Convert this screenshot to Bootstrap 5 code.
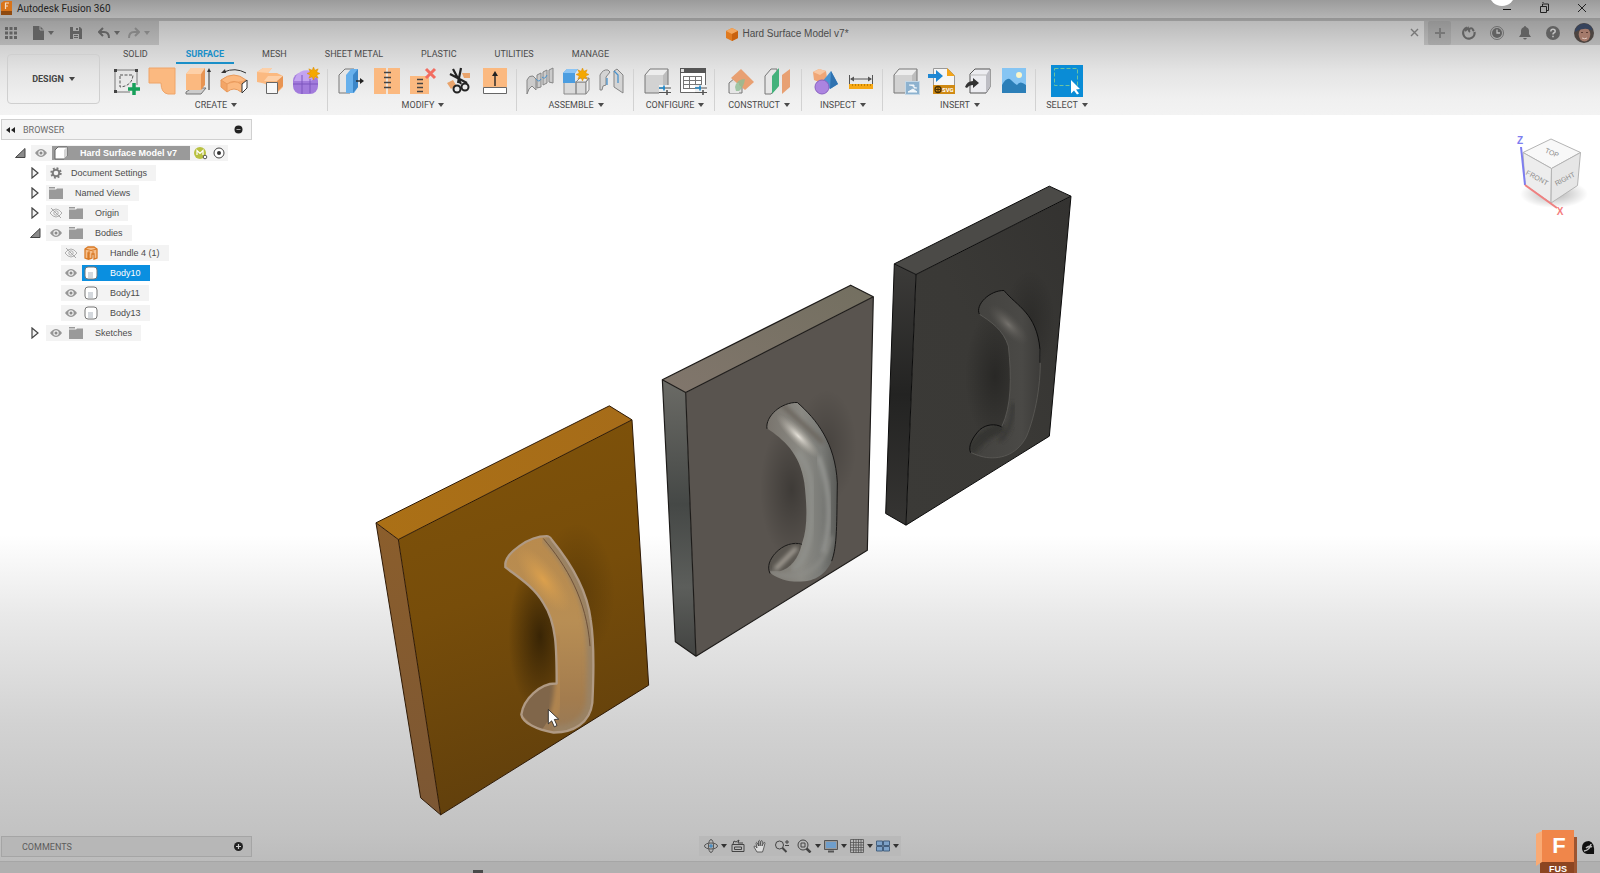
<!DOCTYPE html>
<html lang="en">
<head>
<meta charset="utf-8">
<meta name="viewport" content="width=device-width, initial-scale=1">
<title>Autodesk Fusion 360</title>
<link href="https://cdn.jsdelivr.net/npm/bootstrap@5.3.0/dist/css/bootstrap.min.css" rel="stylesheet">
<style>
:root{--ui:"Liberation Sans",Arial,sans-serif;--label:Roboto,"Liberation Sans",sans-serif;--ink:#4b4b4b}
body{font-family:var(--ui);font-size:10px;line-height:14px;color:var(--ink);overflow:hidden}
button{border:0;background:none;padding:0;color:inherit;font:inherit;display:inline-flex;align-items:center;justify-content:center}
svg{display:block;flex:none}
.title-strip{height:21px;background:linear-gradient(#9b9b9b,#b5b5b5 18px,#939393 18px,#999);color:#222;position:relative;overflow:hidden}
.app-name{font-family:Roboto,sans-serif;line-height:18px}
.win-btn{width:37px;height:16px;color:#222}
.bubble{position:absolute;right:85px;top:-20px;width:26px;height:26px;border-radius:50%;background:#fff}
.app-head{background:linear-gradient(#bababa,#cfcfcf 23px,#e4e4e4 50px,#f0f0f0 78px,#f3f3f3)}
.tab-strip{height:24px}
.dark-bar{background:linear-gradient(#9d9d9d,#b3b3b3);color:#616161}
.quick{width:159px;padding-left:5px}
.doc-name{padding:2px 0 0 6px}
.plus-btn{width:23px;height:24px;background:#00000012;color:#777;border-radius:2px}
.round-btn{width:28px;height:22px}
.avatar{width:33px}
.design-btn{width:93px;height:50px;margin:9px 3px 0 7px;border:1px solid #cfcfcf;border-radius:4px;font:bold 9px/14px var(--label);gap:5px;color:#444}
.rib-tabs{height:19px;padding-left:10px;gap:18px;font-family:var(--label);font-size:9px}
.rib-tabs button{padding:0 10px;height:19px;border-bottom:2px solid transparent}
.rib-tabs .on{color:#1a8fc8;font-weight:bold;border-color:#1a8fc8}
.tools{padding-top:1px}
.tool-group{padding:0 4px 0 5px;position:relative;height:50px}
.tool-group:not(:last-child)::after{content:"";position:absolute;right:0;top:4px;height:42px;border-right:1px solid #d2d2d2}
.tool-group.wide{padding:0 7px 0 8px}
.tool{width:36px;height:32px}
.tool.picked{width:32px;background:#0a8cd6;margin:0 2px}
.group-label{font-family:var(--label);font-size:9px;gap:4px;height:14px;margin-top:1px}
.caret{width:0;height:0;border:3px solid transparent;border-top:4px solid currentColor;border-bottom:0}
.view{background:linear-gradient(#fff 0,#fff 420px,#e9e9e9 500px,#d2d2d2 610px,#c2c2c2 720px,#bcbcbc)}
.scene{position:absolute;inset:0;width:100%;height:100%}
.side{width:252px;padding-left:1px}
.side-bar{height:21px;font-family:var(--label);font-size:9px;color:#6b6b6b;background:#f3f3f3;border:1px solid #d0d0d0;padding:0 8px 0 4px}
.browser-bar{margin-top:4px}
.comments{background:#b7b7b7;border-color:#a5a5a5;color:#5c5c5c;padding-left:20px}
.tree{font-size:9px;line-height:16px;padding-top:3px}
.tree li{display:flex;align-items:center;height:20px;gap:3px}
.tree button{width:16px;height:16px}
.l0{padding-left:11px}.l1{padding-left:26px}.l2{padding-left:60px}
.item{display:inline-flex;align-items:center;height:16px;background:#f3f3f3;padding:0 0 0 3px;gap:4px}
.pick{display:inline-flex;align-items:center;height:16px;gap:12px;padding:0 9px 0 2px}
.pick.near{gap:8px;padding-left:0}.pick.first{padding-left:0}
.pick.root{background:#9a9a9a;color:#fff;font-weight:bold;height:14px;padding-right:13px}
.pick.sel{background:#0a8fe0;color:#fff}
.cube{position:absolute;right:8px;top:12px}
.nav-wrap{padding-right:252px}
.nav-tools{background:#b9b9b9;height:20px;color:#333;padding:0 2px}
.nav-tools button{width:22px;height:20px}
.nav-tools .slim{width:20px}
.nav-tools .drop{width:6px}
.timeline{height:12px;background:#b0b0b0;border-top:1px solid #a6a6a6}
.marker{width:10px;height:4px;background:#4a4a4a;margin-left:473px;margin-top:8px}
.brand-badge{position:absolute;right:0;bottom:0}
</style>
</head>
<body class="d-flex flex-column vh-100">

<svg width="0" height="0" class="position-absolute" aria-hidden="true">
<defs>
<symbol id="eye" viewBox="0 0 14 12"><path d="M1 6q6-8 12 0q-6 8-12 0z" fill="#969696"/><circle cx="7" cy="6" r="2.700" fill="#efefef"/><circle cx="7" cy="6" r="1.500" fill="#8a8a8a"/></symbol>
<symbol id="eyeoff" viewBox="0 0 14 12"><path d="M1 6q6-8 12 0q-6 8-12 0z" fill="none" stroke="#b0b0b0"/><circle cx="7" cy="6" r="2.200" fill="none" stroke="#b0b0b0"/><path d="M2 1l10 10" stroke="#a8a8a8"/></symbol>
<symbol id="folder" viewBox="0 0 14 12"><path d="M0 0h6v1.500H0zM0 2.500h7l1-1h6V12H0z" fill="#9a9a9a"/></symbol>
<symbol id="shut" viewBox="0 0 10 12"><path d="M2 1l6 5-6 5z" fill="#f2f2f2" stroke="#444" stroke-width="1.200"/></symbol>
<symbol id="open" viewBox="0 0 12 12"><path d="M11 1.500v9H1.500z" fill="#8b8b8b" stroke="#444"/></symbol>
<symbol id="body" viewBox="0 0 14 14"><rect x="1" y="1" width="12" height="12" rx="3" fill="#fff" stroke="#777"/><path d="M4 6h5v6H4z" fill="#d4d8dd"/></symbol>
<symbol id="box" viewBox="0 0 28 28"><path d="M2 8h18v18H2z" fill="#d2d2d2"/><path d="M20 8l5-6v18l-5 6z" fill="#bdbdbd"/><path d="M2 8l5-6h18l-5 6z" fill="#ededed"/><path d="M2 8l5-6h18v18l-5 6H2z" fill="none" stroke="#777"/></symbol>
<symbol id="star" viewBox="-7 -7 14 14"><path d="M0-7l1.500 3.500L5-5 3.500-1.500 7 0 3.500 1.500 5 5 1.500 3.500 0 7-1.500 3.500-5 5-3.500 1.500-7 0-3.500-1.500-5-5-1.500-3.500z" fill="#f5a800" stroke="#d98a00" stroke-width=".5"/></symbol>
<symbol id="sliders" viewBox="0 0 12 10"><path d="M0 3h12M0 7.500h12" stroke="#555" stroke-width="1.200"/><path d="M0 3h6" stroke="#1f88c9" stroke-width="1.400"/><path d="M5 .5v5" stroke="#1f88c9" stroke-width="1.600"/><path d="M8 5v5" stroke="#555" stroke-width="1.600"/></symbol>
<linearGradient id="gTop" x2="1" y2="0"><stop stop-color="#ab7016"/><stop offset="1" stop-color="#a66c19"/></linearGradient>
<linearGradient id="gFront" x2=".2" y2="1"><stop stop-color="#80530a"/><stop offset=".5" stop-color="#774d0a"/><stop offset="1" stop-color="#62400c"/></linearGradient>
<linearGradient id="gSide" x2="0" y2="1"><stop stop-color="#8b5e2c"/><stop offset="1" stop-color="#7c5734"/></linearGradient>
<radialGradient id="shade"><stop stop-color="#000" stop-opacity=".5"/><stop offset="1" stop-color="#000" stop-opacity="0"/></radialGradient>
<radialGradient id="glow"><stop stop-color="#dca04c"/><stop offset="1" stop-color="#cf9a50" stop-opacity="0"/></radialGradient>
<linearGradient id="gHandle" x2="0" y2="1"><stop stop-color="#b98a4c"/><stop offset=".45" stop-color="#b88e54"/><stop offset=".8" stop-color="#a37c4e"/><stop offset="1" stop-color="#94795a"/></linearGradient>
<linearGradient id="mTop" x1="0" y1="1" x2="1" y2="0"><stop stop-color="#81766c"/><stop offset="1" stop-color="#736f60"/></linearGradient>
<linearGradient id="mSide" x2="0" y2="1"><stop stop-color="#6b6b66"/><stop offset=".45" stop-color="#454846"/><stop offset=".75" stop-color="#5c5e5b"/><stop offset="1" stop-color="#424341"/></linearGradient>
<linearGradient id="mHandle" x2="1" y2="0"><stop stop-color="#77726b"/><stop offset=".5" stop-color="#8b8a84"/><stop offset=".75" stop-color="#7b7c78"/><stop offset="1" stop-color="#555653"/></linearGradient>
<radialGradient id="mGlow"><stop stop-color="#e6e2da"/><stop offset="1" stop-color="#a9a49a" stop-opacity="0"/></radialGradient>
<linearGradient id="dFront" x1="1" y1="0" x2="0" y2="1"><stop stop-color="#333230"/><stop offset=".5" stop-color="#3a3936"/><stop offset="1" stop-color="#3b3a37"/></linearGradient>
<linearGradient id="dSide" x2="0" y2="1"><stop stop-color="#3c3b39"/><stop offset=".5" stop-color="#232322"/><stop offset="1" stop-color="#363533"/></linearGradient>
<linearGradient id="dHandle" x2="1" y2="0"><stop stop-color="#42413e"/><stop offset=".7" stop-color="#4a4946"/><stop offset="1" stop-color="#383735"/></linearGradient>
<radialGradient id="dGlow"><stop stop-color="#74716c"/><stop offset="1" stop-color="#55534f" stop-opacity="0"/></radialGradient>
<filter id="soft"><feGaussianBlur stdDeviation="7"/></filter>
<clipPath id="hc1"><path d="M436 522C440 490 505 440 560 440C600 475 680 590 692 690C703 760 700 880 697 940C690 1000 640 1030 580 1029C530 1020 488 1000 484 975C490 930 540 880 590 882C590 780 590 700 550 640C520 590 470 560 436 533z"/></clipPath>
<clipPath id="hc2"><path d="M351 476C345 440 395 397 442 399C500 450 556 520 562 640C560 760 562 830 545 875C520 930 470 942 420 935C390 930 365 915 360 908C350 890 360 870 375 852C400 825 430 817 456 822C475 770 470 700 463 640C450 550 400 510 351 476z"/></clipPath>
<clipPath id="hc3"><path d="M328 434C315 405 360 362 402 363C440 410 500 430 510 540C516 640 495 740 470 800C445 850 400 870 350 864C325 860 310 852 300 848C292 830 310 800 330 780C350 764 375 762 395 772C425 710 425 620 415 530C400 480 360 455 328 434z"/></clipPath>
</defs>
</svg>

<header>
<div class="title-strip d-flex align-items-start">
  <svg width="13" height="16" viewBox="0 0 13 16"><path d="M1 3l3-2h8v10H1z" fill="#d9741a"/><path d="M1 11h11v4H1z" fill="#8f4a10"/><path d="M5 3h4M5 6h3M5.500 3v6" stroke="#f5dcc5" stroke-width="1.200"/></svg>
  <span class="app-name ms-1">Autodesk Fusion 360</span>
  <div class="ms-auto d-flex">
    <span class="bubble"></span>
    <button class="win-btn" aria-label="Minimize"><svg width="10" height="10"><path d="M0 6.500h8" stroke="#111"/></svg></button>
    <button class="win-btn" aria-label="Restore"><svg width="10" height="12" fill="none" stroke="#222"><path d="M.5 4.500h6v6h-6zM2.500 4V2h6v6.500H7M2 0h2"/></svg></button>
    <button class="win-btn" aria-label="Close"><svg width="10" height="10"><path d="M1 1l8 8M9 1l-8 8" stroke="#222"/></svg></button>
  </div>
</div>

<div class="app-head">
<div class="tab-strip d-flex">
  <div class="quick dark-bar d-flex align-items-center">
    <button aria-label="Data panel" class="me-3"><svg width="12" height="12" fill="currentColor"><path d="M0 0h3v3H0zM4.500 0h3v3h-3zM9 0h3v3H9zM0 4.500h3v3H0zM4.500 4.500h3v3h-3zM9 4.500h3v3H9zM0 9h3v3H0zM4.500 9h3v3h-3zM9 9h3v3H9z"/></svg></button>
    <button aria-label="File" class="gap-1 me-3"><svg width="11" height="14" fill="currentColor"><path d="M0 0h7l4 4v10H0z"/><path d="M7 0v4h4" fill="none" stroke="#aaa"/></svg><span class="caret"></span></button>
    <button aria-label="Save" class="me-3"><svg width="12" height="12"><path d="M0 0h10l2 2v10H0z" fill="currentColor"/><path d="M3 0h6v4H3zM3 7h6v5H3z" fill="#a9a9a9"/><path d="M6 1h2v2H6zM4 8h4v1H4zM4 10h4v1H4z" fill="currentColor"/></svg></button>
    <button aria-label="Undo" class="gap-1 me-2"><svg width="12" height="12" fill="none" stroke="currentColor" stroke-width="2"><path d="M5 1L1 5l4 4M1 5h5q5 0 5 6"/></svg><span class="caret"></span></button>
    <button aria-label="Redo" class="gap-1 opacity-50"><svg width="12" height="12" fill="none" stroke="currentColor" stroke-width="2"><path d="M7 1l4 4-4 4M11 5H6q-5 0-5 6"/></svg><span class="caret"></span></button>
  </div>
  <div class="flex-grow-1 d-flex align-items-center">
    <div class="doc-name flex-grow-1 d-flex justify-content-center align-items-center gap-1">
      <svg width="12" height="13"><path d="M6 0l6 3v7l-6 3-6-3V3z" fill="#e07a1f"/><path d="M6 0l6 3-6 3-6-3z" fill="#f2a65e"/><path d="M6 6l6-3v7l-6 3z" fill="#c9620f"/></svg>
      <span>Hard Surface Model v7*</span>
    </div>
    <button class="me-1" aria-label="Close document"><svg width="10" height="10"><path d="M1 1l7 7M8 1l-7 7" stroke="#777" stroke-width="1.400"/></svg></button>
  </div>
  <div class="dark-bar d-flex align-items-center ps-1">
    <button class="plus-btn" aria-label="New design"><svg width="12" height="12"><path d="M6 1v10M1 6h10" stroke="currentColor" stroke-width="2"/></svg></button>
    <button class="round-btn ms-1" aria-label="Extensions"><svg width="14" height="14" fill="none" stroke="currentColor"><path d="M5 1.500A5.700 5.700 0 1 0 12.500 6" stroke-width="2.200"/><path d="M3 5l3-3 1 3M8 6a2 2 0 1 1 3-2l1 1" stroke-width="2"/></svg></button>
    <button class="round-btn" aria-label="Job status"><svg width="14" height="14"><circle cx="7" cy="7" r="6.500" fill="none" stroke="currentColor" stroke-width=".8"/><circle cx="7" cy="7" r="5" fill="currentColor"/><path d="M7 3.500V7h3" fill="none" stroke="#bbb" stroke-width="1.300"/></svg></button>
    <button class="round-btn" aria-label="Notifications"><svg width="12" height="14" fill="currentColor"><path d="M6 0q1 0 1 1 3 1 3 4v3l2 3H0l2-3V5q0-3 3-4 0-1 1-1zM4 12h4q-2 3-4 0z"/></svg></button>
    <button class="round-btn" aria-label="Help"><svg width="14" height="14"><circle cx="7" cy="7" r="7" fill="currentColor"/><path d="M4.800 5.500q0-2.200 2.200-2.200t2.200 2q0 1.200-1.400 1.700-.8.400-.8 1.400M7 9.800v1.500" fill="none" stroke="#c4c4c4" stroke-width="1.500"/></svg></button>
    <button class="avatar" aria-label="Account"><svg width="20" height="20"><circle cx="10" cy="10" r="10" fill="#4c4440"/><ellipse cx="10.500" cy="11.500" rx="5.800" ry="7" fill="#a47a6b"/><path d="M1 7Q4 0 11 .5q7 1 7.500 7Q10 3.500 1 9z" fill="#36435c"/><path d="M7 9.500h2M12 9.500h2" stroke="#5a3c33"/><path d="M8 15q3 1.500 5 0" stroke="#e0c8bf" fill="none"/></svg></button>
  </div>
</div>

<div class="d-flex">
  <button class="design-btn">DESIGN <span class="caret"></span></button>
  <div>
    <nav class="rib-tabs d-flex" aria-label="Workspace tabs">
      <button>SOLID</button><button class="on">SURFACE</button><button>MESH</button><button>SHEET METAL</button><button>PLASTIC</button><button>UTILITIES</button><button>MANAGE</button>
    </nav>
    <div class="tools d-flex">
      <div class="tool-group">
        <div class="d-flex">
          <button class="tool" aria-label="Create sketch"><svg width="28" height="28"><path d="M3 3h22v15M3 3v22h15" fill="none" stroke="#777"/><path d="M8 8h13q-1 11-13 12z" fill="none" stroke="#555" stroke-dasharray="3 1.500"/><path d="M2 2h3v3H2zM23 2h3v3h-3zM2 23h3v3H2z" fill="#444"/><path d="M22 16v12M16 22h12" stroke="#17a05a" stroke-width="3.500"/></svg></button>
          <button class="tool" aria-label="Patch"><svg width="28" height="28"><path d="M1 1h26v26h-7q-7-1-7-11H1z" fill="#fbb980" stroke="#efa468"/></svg></button>
          <button class="tool" aria-label="Extrude"><svg width="28" height="28"><path d="M2 25l6-4h14l-5 6H2z" fill="#ccc" stroke="#777"/><path d="M2 7l5-6h14l-4 6v16H2z" fill="#fbb980"/><path d="M2 7l5-6h14l-4 6z" fill="#fdd0a8"/><path d="M17 7l4-6v17l-4 5z" fill="#e89452"/><path d="M25 23V4" stroke="#333"/><path d="M23 5l2-4 2 4z" fill="#333"/></svg></button>
          <button class="tool" aria-label="Revolve"><svg width="28" height="28"><path d="M1 13q13-10 25 0l-5 12q-7-6-14 0z" fill="#fbb980" stroke="#e89a5c"/><path d="M1 13l6 4v8l-6-5zM7 17q7-5 14 0l5-4" fill="#f3a566" stroke="#e89a5c"/><path d="M22 17l5-4v8l-5 5z" fill="#fff" stroke="#333"/><path d="M4 5q11-5 22 1" fill="none" stroke="#333"/><path d="M1 6l4-4 1 4z" fill="#333"/></svg></button>
          <button class="tool" aria-label="Loft"><svg width="28" height="28"><path d="M1 5l6-4h9l-4 5h9l6 3v11l-5 5-9-6q-4-3-12-4z" fill="#fbb980"/><path d="M1 5l6-4h9l-4 5zM12 9h15l-5 5H8z" fill="#fdd0a8"/><path d="M21 14l6-5v10l-5 5z" fill="#e89452"/><path d="M10.500 15.500h11v11h-11z" fill="#f7f7f7" stroke="#666"/></svg></button>
          <button class="tool" aria-label="Create form"><svg width="28" height="28"><rect x="1" y="6" width="25" height="21" rx="8" fill="#a27bdc"/><path d="M4 9q5-8 17-5l4 6-6 4H2z" fill="#c3a3f0"/><path d="M1 17h25M10 8v19M18 12v14" stroke="#7c57be" fill="none"/><use href="#star" x="15" y="0" width="13" height="13"/></svg></button>
        </div>
        <button class="group-label w-100">CREATE <span class="caret"></span></button>
      </div>
      <div class="tool-group">
        <div class="d-flex">
          <button class="tool" aria-label="Press pull"><svg width="28" height="28"><path d="M2 8l6-6h9l-4 6v18H2z" fill="#e6e6e6" stroke="#777"/><path d="M9 8l5-6h7v18l-4 6H9z" fill="#67b0ec"/><path d="M16 8l5-6v18l-5 6z" fill="#3b86c8"/><path d="M19 14h5" stroke="#222" stroke-width="1.400"/><path d="M23 11l4 3-4 3z" fill="#222"/></svg></button>
          <button class="tool" aria-label="Stitch"><svg width="28" height="28"><path d="M1 1h12v26H1zM15 1h12v26H15z" fill="#fbb980"/><path d="M14 1v26" stroke="#f5e0cd"/><path d="M11 5.500h7M11 10.500h7M11 15.500h7M11 20.500h7" stroke="#444" stroke-width="1.300"/></svg></button>
          <button class="tool" aria-label="Unstitch"><svg width="28" height="28"><path d="M1 9h19v18H1z" fill="#fbb980"/><path d="M8 12.500h6M8 16.500h6M8 20.500h6M8 24.500h6" stroke="#444" stroke-width="1.300"/><path d="M17 2l9 9M26 2l-9 9" stroke="#f26d61" stroke-width="3"/></svg></button>
          <button class="tool" aria-label="Trim"><svg width="28" height="28"><path d="M2 16l6-3 3 5-5 4zM17 6h8v5h-6z" fill="#e9a46c"/><path d="M8 2l8 15M16 1l-3 15M5 7l17 9" stroke="#222" stroke-width="2.200"/><circle cx="12" cy="22" r="3.500" fill="none" stroke="#222" stroke-width="2"/><circle cx="20" cy="20" r="3.500" fill="none" stroke="#222" stroke-width="2"/></svg></button>
          <button class="tool" aria-label="Extend"><svg width="28" height="28"><path d="M2 1h24v19H2z" fill="#fbb980"/><path d="M2.500 20.500h23v6h-23z" fill="#fff" stroke="#666"/><path d="M14 19V8" stroke="#222" stroke-width="1.400"/><path d="M11 9l3-5 3 5z" fill="#222"/></svg></button>
        </div>
        <button class="group-label w-100">MODIFY <span class="caret"></span></button>
      </div>
      <div class="tool-group">
        <div class="d-flex">
          <button class="tool" aria-label="New component"><svg width="28" height="28"><g fill="#cbcbcb" stroke="#858585"><path d="M1 27V13q2-5 6-4l3 3v11l-4-4-3 3zM11 21V8l4-2v14zM17 18V5l4-2v13zM23 15V3l4-2v15z"/></g><path d="M10 12q3 4 5 0M16 10q3 3 5-2" fill="none" stroke="#4a93cc"/></svg></button>
          <button class="tool" aria-label="Joint"><svg width="28" height="28"><path d="M2 15h12v12H2zM14 15h10v12H14z" fill="#dadada" stroke="#8a8a8a"/><path d="M14 15l4-4h9l-3 4zM24 15l3-4v12l-3 4z" fill="#efefef" stroke="#8a8a8a"/><path d="M1 6l4-4h11l-3 4v10H1z" fill="#4b9de0"/><path d="M1 6l4-4h11l-3 4z" fill="#8cc5f5"/><use href="#star" x="14" y="1" width="13" height="13"/></svg></button>
          <button class="tool" aria-label="Rigid group"><svg width="28" height="28"><path d="M2 23V8q3-6 8-5l2 2-4 5v8l-3 1-1 4zM16 20V4l3-2 6 6v18z" fill="#d4d4d4" stroke="#858585"/><path d="M9 11v7M16 4l4 4v8" fill="none" stroke="#4a93cc" stroke-width="1.300"/></svg></button>
        </div>
        <button class="group-label w-100">ASSEMBLE <span class="caret"></span></button>
      </div>
      <div class="tool-group">
        <div class="d-flex">
          <button class="tool" aria-label="Configure design"><svg width="28" height="28"><use href="#box" width="28" height="28"/><path d="M16 18h12v10H16z" fill="#f0f0f0"/><use href="#sliders" x="16" y="18" width="12" height="10"/></svg></button>
          <button class="tool" aria-label="Configuration table"><svg width="28" height="28"><path d="M1.500 1.500h25v24h-25z" fill="#fff" stroke="#666"/><path d="M1 1h26v5H1z" fill="#555"/><path d="M2 2h3v3H2z" fill="#ddd"/><path d="M4 9.500h19M4 13.500h19M4 17.500h19M4 21.500h12M4.500 9v13M10.500 9v13M16.500 9v13M22.500 9v8" stroke="#777"/><path d="M16 18h12v10H16z" fill="#f0f0f0"/><use href="#sliders" x="16" y="18" width="12" height="10"/></svg></button>
        </div>
        <button class="group-label w-100">CONFIGURE <span class="caret"></span></button>
      </div>
      <div class="tool-group wide">
        <div class="d-flex">
          <button class="tool" aria-label="Offset plane"><svg width="28" height="28"><path d="M2 16l6-5h12l-5 5v10H2z" fill="#e0e0e0" stroke="#777"/><path d="M14 2L27 15 18 23 4 11z" fill="#e8a072"/><path d="M3 16h9v10H3z" fill="#e6e6e6"/><path d="M8 20q2-8 10-8-1 8-6 12H9z" fill="#8fbd93" opacity=".8"/></svg></button>
          <button class="tool" aria-label="Midplane"><svg width="28" height="28"><path d="M2 9l6-7h6v18l-6 7H2z" fill="#e6e6e6" stroke="#777"/><path d="M9 9l7-8v18l-7 8z" fill="#44b27c"/><path d="M19 8l8-6v18l-8 7z" fill="#e8a072"/></svg></button>
        </div>
        <button class="group-label w-100">CONSTRUCT <span class="caret"></span></button>
      </div>
      <div class="tool-group">
        <div class="d-flex">
          <button class="tool" aria-label="Interference"><svg width="28" height="28"><path d="M2 5l6-3 7 2 1 7-6 5-7-3z" fill="#f0a676"/><path d="M2 5l6-3 7 2-6 4z" fill="#f8c7a2"/><path d="M20 4l7 13-8 5-8-7z" fill="#4a93d0"/><path d="M20 4l7 13-8 5z" fill="#2f72b0"/><circle cx="11" cy="20" r="7" fill="#ac84e0" stroke="#8a62c2"/></svg></button>
          <button class="tool" aria-label="Measure"><svg width="28" height="28"><path d="M2.500 8v9M25.500 8v9M4 12h20" stroke="#555"/><path d="M3 12l4-2.500v5zM25 12l-4-2.500v5z" fill="#555"/><path d="M2 17h24v5H2z" fill="#f7a814"/><path d="M5.500 17v2M8.500 17v2M11.500 17v2M14.500 17v2M17.500 17v2M20.500 17v2M23.500 17v2" stroke="#c07f00"/></svg></button>
        </div>
        <button class="group-label w-100">INSPECT <span class="caret"></span></button>
      </div>
      <div class="tool-group">
        <div class="d-flex">
          <button class="tool" aria-label="Insert derive"><svg width="28" height="28"><use href="#box" width="28" height="28"/><rect x="13.500" y="14.500" width="14" height="13" fill="#8db2cf" stroke="#c5d8e6"/><path d="M17 18h5v3h3M16 25h9l-4-3z" fill="#f3f8fb" stroke="#f3f8fb"/></svg></button>
          <button class="tool" aria-label="Insert SVG"><svg width="28" height="28"><path d="M5.500 1.500h14l7 7v18h-21z" fill="#f6f6f6" stroke="#999"/><path d="M19 1l8 8h-8z" fill="#f3a51a"/><path d="M5 18h22v9H5z" fill="#d08a14"/><circle cx="10" cy="22.500" r="3" fill="none" stroke="#4a3000" stroke-width="1.300"/><path d="M10 20v5M7.500 22.500h5" stroke="#4a3000"/><text x="14" y="25" font-size="6" font-weight="bold" fill="#fff" font-family="Roboto,sans-serif">SVG</text><path d="M0 7h8V3l7 6-7 6v-4H0z" fill="#1e87d3"/></svg></button>
          <button class="tool" aria-label="Insert CAD"><svg width="28" height="28"><path d="M6 7l5-5h15v18l-4 6H6z" fill="#ececf0" stroke="#555"/><path d="M22 8l4-6v18l-4 6z" fill="#bdbdc4"/><path d="M6 8h16" stroke="#bbb"/><path d="M1 20q2-6 8-6v-3l6 5-6 5v-3q-4 0-6 3z" fill="#333"/></svg></button>
          <button class="tool" aria-label="Canvas image"><svg width="28" height="28"><path d="M2 1h24v25H2z" fill="#86c5f3"/><path d="M2 18q5-9 9-5t6 5q3-5 9 0v8H2z" fill="#2c7fb8"/><circle cx="19" cy="8" r="3" fill="#fcf6c9"/></svg></button>
        </div>
        <button class="group-label w-100">INSERT <span class="caret"></span></button>
      </div>
      <div class="tool-group">
        <div class="d-flex justify-content-center px-2">
          <button class="tool picked" aria-label="Select"><svg width="32" height="32"><path d="M3.500 3.500h23v17h-23z" fill="none" stroke="#6dc3a0" stroke-dasharray="4 2"/><path d="M20 15l9 9-4 .5 3 4-2 1-3-4-3 3z" fill="#fff"/></svg></button>
        </div>
        <button class="group-label w-100">SELECT <span class="caret"></span></button>
      </div>
    </div>
  </div>
</div>
</div>
</header>

<main class="view flex-grow-1 position-relative d-flex flex-column justify-content-between">
<svg class="scene" viewBox="0 116 1600 745" role="img" aria-label="Three door pull models">
  <g transform="translate(360 390) scale(.33333)" stroke-linejoin="round">
    <path d="M48 400L748 49 816 91 115 450z" fill="url(#gTop)"/>
    <path d="M115 450L816 91 866 887 242 1276z" fill="url(#gFront)"/>
    <path d="M48 400L115 450 242 1276 182 1225z" fill="url(#gSide)"/>
    <ellipse cx="540" cy="740" rx="95" ry="230" fill="url(#shade)"/>
    <ellipse cx="650" cy="610" rx="115" ry="210" fill="url(#shade)" opacity=".4"/>
    <path d="M48 400L748 49 816 91 866 887 242 1276 182 1225zL115 450 816 91M115 450L242 1276" fill="none" stroke="#2e1905" stroke-width="3"/>
    <g clip-path="url(#hc1)">
      <path d="M400 400h330v660H400z" fill="url(#gHandle)"/>
      <path d="M484 975C490 930 540 880 590 882Q610 960 560 1000L540 1030z" fill="#80664a"/>
      <ellipse cx="550" cy="570" rx="45" ry="120" fill="url(#glow)" transform="rotate(-38 550 570)"/>
      <path d="M590 740Q610 930 570 1000" fill="none" stroke="#b1854f" stroke-width="26" filter="url(#soft)"/>
      <path d="M560 440C600 475 680 590 692 690C703 760 700 880 697 940C690 1000 640 1030 580 1029" fill="none" stroke="#9a8263" stroke-width="40" filter="url(#soft)"/>
    </g>
    <path d="M550 447C620 530 680 630 690 770" fill="none" stroke="#6e5138" stroke-width="3"/>
    <path d="M436 522C440 490 505 440 560 440Q568 440 574 449C620 505 680 590 692 690C703 760 700 880 697 940C690 1000 640 1030 580 1029C530 1020 488 1000 484 975C490 930 540 880 590 882C590 780 590 700 550 640C520 590 470 560 436 533z" fill="none" stroke="#b09a84" stroke-width="7"/>
    <path d="M565 960v43l10-9 8 18 8-4-8-18 13-1z" fill="#fff" stroke="#222" stroke-width="2.500"/>
  </g>
  <g transform="translate(650 270) scale(.33333)" stroke-linejoin="round">
    <path d="M37 331L602 47 670 82 107 369z" fill="url(#mTop)"/>
    <path d="M107 369L670 82 652 842 138 1160z" fill="#59544f"/>
    <path d="M37 331L107 369 138 1160 76 1117z" fill="url(#mSide)"/>
    <ellipse cx="425" cy="660" rx="95" ry="210" fill="url(#shade)" opacity=".6"/>
    <ellipse cx="530" cy="530" rx="90" ry="170" fill="url(#shade)" opacity=".4"/>
    <path d="M37 331L602 47 670 82 652 842 138 1160 76 1117zL107 369 670 82M107 369L138 1160" fill="none" stroke="#1d1b19" stroke-width="3.500"/>
    <g clip-path="url(#hc2)">
      <path d="M340 390h230v560H340z" fill="url(#mHandle)"/>
      <path d="M356 905Q350 850 400 825L456 822Q440 890 390 905z" fill="#5a5650"/>
      <path d="M375 900L440 835" stroke="#aaa59c" stroke-width="12" filter="url(#soft)"/>
      <path d="M395 405L520 520" stroke="#6b655d" stroke-width="14" filter="url(#soft)"/>
      <ellipse cx="445" cy="500" rx="24" ry="90" fill="url(#mGlow)" transform="rotate(-45 445 500)"/>
      <path d="M440 550Q490 590 485 700Q490 850 430 900" fill="none" stroke="#8f908b" stroke-width="15" filter="url(#soft)"/>
      <path d="M505 560Q560 700 520 850" fill="none" stroke="#999a96" stroke-width="12" filter="url(#soft)"/>
      <path d="M360 908Q400 925 450 915Q520 900 545 800" fill="none" stroke="#8e8e89" stroke-width="8" filter="url(#soft)"/>
    </g>
    <path d="M351 478C345 440 395 397 442 399C500 450 556 520 562 640C560 760 562 830 545 875M360 912C350 890 360 870 375 852C400 825 430 817 456 824" fill="none" stroke="#191817" stroke-width="3"/>
  </g>
  <g transform="translate(870 170) scale(.33333)" stroke-linejoin="round">
    <path d="M73 283L538 50 603 80 138 315z" fill="#4b4a47"/>
    <path d="M138 315L603 80 538 800 108 1067z" fill="url(#dFront)"/>
    <path d="M73 283L138 315 108 1067 47 1032z" fill="url(#dSide)"/>
    <ellipse cx="375" cy="620" rx="90" ry="200" fill="url(#shade)" opacity=".6"/>
    <ellipse cx="480" cy="450" rx="75" ry="150" fill="url(#shade)" opacity=".4"/>
    <path d="M73 283L538 50 603 80 538 800 108 1067 47 1032zL138 315 603 80M138 315L108 1067" fill="none" stroke="#0b0b0b" stroke-width="3"/>
    <g clip-path="url(#hc3)">
      <path d="M280 350h250v530H280z" fill="url(#dHandle)"/>
      <path d="M300 845Q340 790 400 770" fill="none" stroke="#363533" stroke-width="34" filter="url(#soft)"/>
      <path d="M385 815Q425 790 430 700" fill="none" stroke="#383735" stroke-width="12" filter="url(#soft)"/>
      <ellipse cx="415" cy="465" rx="30" ry="80" fill="url(#dGlow)" transform="rotate(-45 415 465)"/>
    </g>
    <path d="M328 434C360 455 400 480 415 530C425 620 425 710 395 772M510 540C516 640 495 740 470 800C445 850 400 870 350 864C325 860 310 852 300 848" fill="none" stroke="#5c5a57" stroke-width="2.500"/>
    <path d="M328 434C315 405 360 362 402 363C440 410 500 430 510 540V580M302 850C292 830 310 800 330 780C350 764 375 762 395 772" fill="none" stroke="#0d0d0d" stroke-width="3"/>
  </g>
</svg>

<aside class="side position-relative">
  <div class="side-bar browser-bar d-flex align-items-center">
    <svg width="9" height="6"><path d="M4 0v6L0 3zM9 0v6L5 3z" fill="#222"/></svg><span class="ms-2">BROWSER</span>
    <button class="ms-auto" aria-label="Collapse browser"><svg width="9" height="9"><circle cx="4.500" cy="4.500" r="4" fill="#222"/><path d="M2.500 4.500h4" stroke="#aaa"/></svg></button>
  </div>
  <ul class="tree list-unstyled mb-0">
    <li class="l0"><button aria-label="Collapse"><svg width="12" height="12"><use href="#open"/></svg></button><span class="item"><svg width="14" height="12"><use href="#eye"/></svg><span class="pick root"><svg width="14" height="14"><path d="M1 4l3-3h9v9l-3 3H1z" fill="#fff" stroke="#666"/><path d="M10 4l3-3v9l-3 3z" fill="#d5d5d5"/></svg>Hard Surface Model v7</span><svg width="14" height="14"><circle cx="6" cy="7" r="6" fill="#b9c141"/><path d="M3 9V4.500l3 3 3-3V9" fill="none" stroke="#fff" stroke-width="1.200"/><circle cx="11" cy="11" r="1.800" fill="#fff" stroke="#555"/></svg><svg width="16" height="12"><circle cx="7" cy="6" r="5" fill="#fff" stroke="#444"/><circle cx="7" cy="6" r="2" fill="#333"/></svg></span></li>
    <li class="l1"><button aria-label="Expand"><svg width="10" height="12"><use href="#shut"/></svg></button><span class="item"><span class="pick near"><svg width="14" height="14" viewBox="-7 -7 14 14"><circle r="3.300" fill="none" stroke="#7b7b7b" stroke-width="2"/><circle r="4.700" fill="none" stroke="#7b7b7b" stroke-width="2" stroke-dasharray="1.850 1.840"/></svg>Document Settings</span></span></li>
    <li class="l1"><button aria-label="Expand"><svg width="10" height="12"><use href="#shut"/></svg></button><span class="item"><span class="pick first"><svg width="14" height="12"><use href="#folder"/></svg>Named Views</span></span></li>
    <li class="l1"><button aria-label="Expand"><svg width="10" height="12"><use href="#shut"/></svg></button><span class="item"><svg width="14" height="12"><use href="#eyeoff"/></svg><span class="pick"><svg width="14" height="12"><use href="#folder"/></svg>Origin</span></span></li>
    <li class="l1"><button aria-label="Collapse"><svg width="12" height="12"><use href="#open"/></svg></button><span class="item"><svg width="14" height="12"><use href="#eye"/></svg><span class="pick"><svg width="14" height="12"><use href="#folder"/></svg>Bodies</span></span></li>
    <li class="l2"><span class="item"><svg width="14" height="12"><use href="#eyeoff"/></svg><span class="pick"><svg width="14" height="14"><path d="M1 3l3-2h6l3 2v9l-3 1V8H8v4l-3 1V7H4v6l-3-1z" fill="#f6bf8b" stroke="#d97a26" stroke-width="1.300"/><path d="M1 3q6 3 12 0M5 5v3M9 5v3" fill="none" stroke="#d97a26"/></svg>Handle 4 (1)</span></span></li>
    <li class="l2"><span class="item"><svg width="14" height="12"><use href="#eye"/></svg><span class="pick sel"><svg width="14" height="14"><use href="#body"/></svg>Body10</span></span></li>
    <li class="l2"><span class="item"><svg width="14" height="12"><use href="#eye"/></svg><span class="pick"><svg width="14" height="14"><use href="#body"/></svg>Body11</span></span></li>
    <li class="l2"><span class="item"><svg width="14" height="12"><use href="#eye"/></svg><span class="pick"><svg width="14" height="14"><use href="#body"/></svg>Body13</span></span></li>
    <li class="l1"><button aria-label="Expand"><svg width="10" height="12"><use href="#shut"/></svg></button><span class="item"><svg width="14" height="12"><use href="#eye"/></svg><span class="pick"><svg width="14" height="12"><use href="#folder"/></svg>Sketches</span></span></li>
  </ul>
</aside>

<svg class="cube" width="80" height="92" viewBox="1512 127 80 92" font-family="Liberation Sans,sans-serif" text-anchor="middle">
  <ellipse cx="1554" cy="194" rx="34" ry="14" fill="url(#shade)" opacity=".6"/>
  <g stroke="#b4b4b4" stroke-linejoin="round"><path d="M1523 152.500L1551 139l29.500 13.500-29 16z" fill="#f8f8f8"/><path d="M1523 152.500l28.500 16-.5 34.500-26-18z" fill="#ededed"/><path d="M1551.500 168.500l29-16-3 33L1551 203z" fill="#e6e6e6"/></g>
  <path d="M1521 147l4 38" stroke="#7d7df0" stroke-width="2"/><path d="M1525 185l32 23" stroke="#f08080" stroke-width="2"/>
  <text x="1520" y="144" font-size="10" fill="#7d7df0" font-weight="bold">Z</text><text x="1560" y="215" font-size="10" fill="#f47c7c" font-weight="bold">X</text>
  <g font-size="7" fill="#8c8c8c"><text transform="translate(1551 155) rotate(22)">TOP</text><text transform="translate(1536 180) rotate(28)">FRONT</text><text transform="translate(1566 181) rotate(-28)">RIGHT</text></g>
</svg>

<div class="position-relative d-flex align-items-start pb-1">
  <div class="side"><div class="side-bar comments d-flex align-items-center"><span>COMMENTS</span><button class="ms-auto" aria-label="Add comment"><svg width="9" height="9"><circle cx="4.500" cy="4.500" r="4.500" fill="#222"/><path d="M2 4.500h5M4.500 2v5" stroke="#ccc" stroke-width="1.200"/></svg></button></div></div>
  <div class="nav-wrap flex-grow-1 d-flex justify-content-center">
  <div class="nav-tools d-flex align-items-center">
    <button class="slim" aria-label="Orbit"><svg width="14" height="14" fill="none" stroke="#555"><ellipse cx="7" cy="7" rx="6.500" ry="3"/><ellipse cx="7" cy="7" rx="2.500" ry="6.500"/><path d="M5 7h4M7 5v4" stroke="#2b7fc0"/></svg></button><button class="drop" aria-label="Orbit options"><span class="caret"></span></button>
    <button aria-label="Look at"><svg width="14" height="14" fill="none" stroke="#444"><path d="M1 5.500h12v7H1zM3.500 8h7v2.500h-7zM2 5l1-3 2 1 3-2-1 3h5"/></svg></button>
    <button aria-label="Pan"><svg width="14" height="14"><path d="M4 13L1 8q0-1.500 1.500-.8L4 9 3 4q.5-1.300 1.400 0L5.500 7V2Q6.200.6 7 2v5l1-5q1-1 1.400.3L9 7l1.800-3.500q1.200-.5 1.200.7L10.500 10 9.500 13z" fill="#ddd" stroke="#444" stroke-width=".8"/></svg></button>
    <button aria-label="Zoom"><svg width="14" height="14" fill="none" stroke="#444"><circle cx="4.500" cy="6" r="4"/><path d="M7.500 9l4 4" stroke-width="2"/><path d="M10 3h4M12 1v4M10 6.500h4"/></svg></button>
    <button aria-label="Fit"><svg width="15" height="14" fill="none" stroke="#444"><circle cx="6" cy="6" r="5"/><path d="M4 4h4v4H4z"/><path d="M9.500 9.500l4 4" stroke-width="2.500"/></svg></button><button class="drop" aria-label="Fit options"><span class="caret"></span></button>
    <button class="slim" aria-label="Display settings"><svg width="14" height="14"><path d="M.5 1.500h13v9H.5z" fill="#9a9a9a" stroke="#555"/><path d="M2 3h10v6H2z" fill="#6f9ecb"/><path d="M4 12.500h6" stroke="#555" stroke-width="2"/></svg></button><button class="drop" aria-label="Display options"><span class="caret"></span></button>
    <button class="slim" aria-label="Grid"><svg width="14" height="14" fill="none" stroke="#555" stroke-width=".8"><path d="M.5.5h13v13H.5zM3.500 0v14M6 0v14M8.500 0v14M11 0v14M0 3.500h14M0 6h14M0 8.500h14M0 11h14"/></svg></button><button class="drop" aria-label="Grid options"><span class="caret"></span></button>
    <button class="slim" aria-label="Viewports"><svg width="14" height="12" fill="#7ea3c9" stroke="#44607f"><path d="M.5 1h6v4.500h-6zM7.500 1h6v4.500h-6zM.5 6.500h6V11h-6zM7.500 6.500h6V11h-6z"/></svg></button><button class="drop" aria-label="Viewport options"><span class="caret"></span></button>
  </div>
  </div>
</div>
</main>

<footer class="timeline"><div class="marker"></div></footer>
<svg class="brand-badge" width="68" height="46" viewBox="1532 827 68 46">
  <path d="M1573 837h4v36h-4z" fill="#9c5531"/><path d="M1540 861h34v12h-34z" fill="#8c4521"/><path d="M1536 834l6-3v31l-6 4z" fill="#f9aa74"/><path d="M1542 830h32v32h-32z" fill="#f0864a"/>
  <text x="1559" y="853" font-size="22" font-weight="bold" fill="#fff" text-anchor="middle" font-family="Liberation Sans,sans-serif">F</text>
  <text x="1558" y="872" font-size="9" font-weight="bold" fill="#fff" text-anchor="middle" font-family="Liberation Sans,sans-serif">FUS</text>
  <path d="M1582 848q0-7 7-7 6 1 5 13h-7q-5-1-5-6z" fill="#111"/><path d="M1584 851q6-1 7-7M1586 848q3-3 6-1" fill="none" stroke="#bbb" stroke-width="1.500"/>
</svg>
<script src="https://cdn.jsdelivr.net/npm/bootstrap@5.3.0/dist/js/bootstrap.bundle.min.js"></script>
</body>
</html>
